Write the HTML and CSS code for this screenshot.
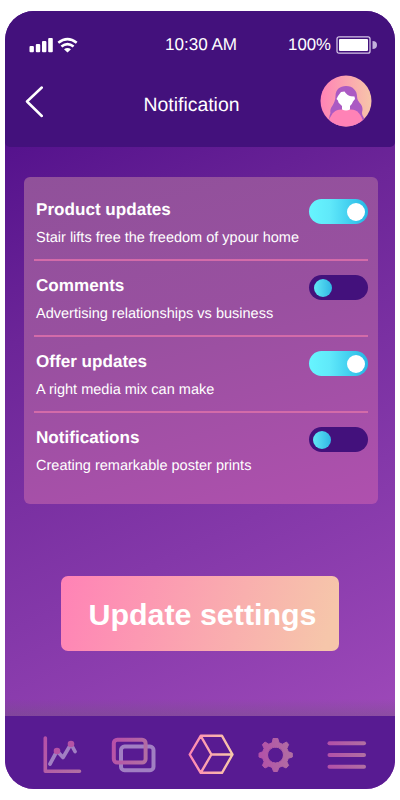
FILE: index.html
```html
<!DOCTYPE html>
<html lang="en">
<head>
<meta charset="utf-8">
<title>Notification</title>
<link rel="stylesheet" href="styles.css">
</head>
<body>
<div class="phone">
  <header class="header">
    <div class="status">
      <svg class="signal" width="50" height="18" viewBox="0 0 50 18" fill="#fff">
        <rect x="0.5" y="9" width="4.4" height="6.2" rx="1"/><rect x="6.8" y="7" width="4.4" height="8.2" rx="1"/><rect x="13" y="4" width="4.4" height="11.2" rx="1"/><rect x="19.2" y="1" width="4.6" height="14.2" rx="1"/>
        <g fill="none" stroke="#fff" stroke-width="2.6"><path d="M29.3 5.8Q38.5-1.5 47.7 5.8"/><path d="M32.4 9.5Q38.5 4.8 44.6 9.5"/></g>
        <path d="M35 12.2Q38.5 9.8 42 12.2L38.5 15.5Z"/>
      </svg>
      <span class="time">10:30 AM</span>
      <div class="power"><span>100%</span>
        <svg width="42" height="20" viewBox="0 0 42 20"><rect x="1" y="1.8" width="33" height="16.4" rx="2" fill="none" stroke="#d3c4e5" stroke-width="1.3"/><rect x="3" y="4" width="29" height="12" rx="1" fill="#fff"/><path d="M36.5 6Q41 6 41 10T36.5 14Z" fill="#c3b2dc"/></svg>
      </div>
    </div>
    <div class="titlebar">
      <svg class="back" width="20" height="34" viewBox="0 0 20 34"><path d="M18.8 3.5L4 17.5L18.8 32" fill="none" stroke="#fff" stroke-width="2.5" stroke-linecap="round" stroke-linejoin="round"/></svg>
      <h1>Notification</h1>
      <svg class="avatar" width="52" height="52" viewBox="0 0 52 52">
        <defs><linearGradient id="skin"><stop stop-color="#ff82b6"/><stop offset="1" stop-color="#f7c6a9"/></linearGradient><clipPath id="round"><circle cx="26" cy="26" r="25.5"/></clipPath></defs>
        <g clip-path="url(#round)"><rect width="52" height="52" fill="url(#skin)"/>
        <path d="M15.5 21C15.5 14.5 20 11 26 11C33 11 37 16 37 21C37 28 42.5 28 42.5 34C42.5 37 41 38 43.5 42C45 45 44 51 40 51H13C8 47 9 41 10.5 38C9 32 15.5 30 15.5 21Z" fill="#ab5ac3"/>
        <path d="M9 45C12 38 15 34.5 21 34.5H31C38 34.5 41 40 43.5 47L38 52H14Z" fill="#ff82b6"/>
        <path d="M22 31L18.5 27.5L18 25.5L16.5 24L18 21L21 17L24.5 16.5Q27 20.5 31 21.3L34.5 21.5L35 24L33 26.5Q32 29.5 30 31V34.5Q26 36.5 22 34.5Z" fill="#fff"/></g>
      </svg>
    </div>
  </header>
  <main class="content">
    <section class="card">
      <div class="item"><div class="copy"><h2>Product updates</h2><p>Stair lifts free the freedom of ypour home</p></div><span class="toggle on"></span></div>
      <div class="item"><div class="copy"><h2>Comments</h2><p>Advertising relationships vs business</p></div><span class="toggle"></span></div>
      <div class="item"><div class="copy"><h2>Offer updates</h2><p>A right media mix can make</p></div><span class="toggle on"></span></div>
      <div class="item"><div class="copy"><h2>Notifications</h2><p>Creating remarkable poster prints</p></div><span class="toggle last"></span></div>
    </section>
    <button class="update">Update settings</button>
  </main>
  <nav class="nav">
    <svg width="390" height="73" viewBox="5 716 390 73" fill="none" stroke-linecap="round" stroke-linejoin="round">
      <defs>
        <linearGradient id="chart" gradientUnits="userSpaceOnUse" x1="43" y1="740" x2="81" y2="770"><stop stop-color="#b650a8"/><stop offset="1" stop-color="#b170a3"/></linearGradient>
        <linearGradient id="cards" gradientUnits="userSpaceOnUse" x1="112" y1="745" x2="148" y2="757"><stop stop-color="#b850a8"/><stop offset="1" stop-color="#b170a3"/></linearGradient>
        <linearGradient id="cube" gradientUnits="userSpaceOnUse" x1="189" y1="0" x2="233" y2="0"><stop stop-color="#ff86b3"/><stop offset="1" stop-color="#f8caa9"/></linearGradient>
        <linearGradient id="gear" gradientUnits="userSpaceOnUse" x1="259" y1="0" x2="293" y2="0"><stop stop-color="#b350a8"/><stop offset="1" stop-color="#b170a2"/></linearGradient>
        <linearGradient id="menu" gradientUnits="userSpaceOnUse" x1="328" y1="0" x2="366" y2="0"><stop stop-color="#b350a8"/><stop offset="1" stop-color="#b170a2"/></linearGradient>
      </defs>
      <path d="M50 764L57 751L63 757.5L71 744L75 751.5" stroke="#a17fc3" stroke-width="3.7"/>
      <path d="M45.3 738V771.3H79.5" stroke="url(#chart)" stroke-width="3.6"/>
      <g fill="#b552a5"><circle cx="57" cy="751" r="3.3"/><circle cx="71" cy="744" r="3.3"/></g>
      <rect x="121" y="746.6" width="32.5" height="23.6" rx="3.5" stroke="#a17fc3" stroke-width="4"/>
      <rect x="113.8" y="739.7" width="31.8" height="22.8" rx="3.5" stroke="url(#cards)" stroke-width="4"/>
      <path d="M189.7 754.5L200.7 735.8H222L232.5 754.5L222 772.8H200.7ZM200.7 735.8L211.4 754.5L200.7 772.8M211.4 754.5L232.5 754.4" stroke="url(#cube)" stroke-width="2.4"/>
      <path stroke="url(#gear)" stroke-width="1" fill="url(#gear)" fill-rule="evenodd" d="M273.4 738.5H277.8L279 742.8L282.5 744.2L286.5 742L288.6 744.5L286.9 748.4L288.3 751.8L292.3 753.2V757L288.3 758.3L286.9 761.8L288.6 765.5L286.1 768L282.1 766.1L279 767.4L277.4 771.5H273.6L272 767.4L268.8 766.1L265 768L262.4 765.5L264.1 761.8L262.7 758.3L259 757V753.2L262.7 751.8L264.1 748.4L262.4 744.5L265 742L268.8 744.2L272 742.8ZM275.5 747A8 8 0 1 0 275.5 763A8 8 0 1 0 275.5 747Z"/>
      <g fill="url(#menu)"><rect x="327.5" y="741.2" width="38.5" height="4" rx="2"/><rect x="327.5" y="753" width="38.5" height="4" rx="2"/><rect x="327.5" y="764.8" width="38.5" height="4" rx="2"/></g>
    </svg>
  </nav>
</div>
</body>
</html>
```
FILE: styles.css
```css
* { box-sizing: border-box; }
body { margin: 0; background: #fff; color: #fff; font-family: "Liberation Sans", Arial, sans-serif; text-rendering: geometricPrecision; }
h1, h2, p { margin: 0; }
svg { display: block; flex: none; }
.phone { width: 390px; height: 778px; margin: 11px 5px; overflow: hidden; border-radius: 29px; display: flex; flex-direction: column; background: linear-gradient(155deg, #4b0a88 5%, #6c2598 35%, #8438a9 65%, #a44dbd 100%); }
.header { height: 135.5px; flex: none; background: #43117c; border-radius: 0 0 5px 5px; }
.status { display: grid; grid-template-columns: 1fr 80px 1fr; grid-template-rows: 20px; align-items: center; height: 20px; margin-top: 24px; padding: 0 17px 0 24px; font-size: 17.1px; line-height: 20px; }
.signal { margin-top: 1px; }
.time { white-space: nowrap; text-align: center; margin-left: -5px; }
.power { display: flex; justify-content: flex-end; align-items: center; gap: 5px; }
.power span { font-size: 16.8px; }
.titlebar { display: grid; grid-template-columns: 52px 1fr 52px; align-items: center; height: 52px; margin-top: 20px; padding: 0 23.5px 0 18px; }
h1 { font-size: 19.4px; font-weight: 400; line-height: 24px; text-align: center; padding: 7px 11.5px 0 0; }
.content { flex: 1; display: flex; flex-direction: column; align-items: center; padding-top: 30px; background: linear-gradient(transparent 97%, rgba(107, 85, 120, .35)); }
.card { width: 354px; height: 327px; margin-left: 2px; padding: 8px 10px; border-radius: 6px; background: linear-gradient(165deg, #90519a, #9950a0 45%, #af50ae); }
.item { height: 76px; padding: 14.5px 0 0 2px; display: flex; justify-content: space-between; border-bottom: 2px solid #d36ba9; }
.item:last-child { border: 0; }
.copy { white-space: nowrap; }
h2 { font-size: 17.1px; line-height: 22px; }
p { margin-top: 8px; font-size: 14.53px; line-height: 18px; }
.toggle { width: 59px; height: 25px; border-radius: 13px; padding: 3.5px 5px; background: #43117c; }
.toggle::before { content: ""; display: block; width: 18px; height: 18px; border-radius: 50%; background: linear-gradient(90deg, #61e8f5, #31b6e4); }
.on { background: linear-gradient(90deg, #67f5ff, #60e9fa 35%, #26b6e5); }
.on::before { margin-left: auto; margin-right: -2px; background: #fff; }
.last { padding-left: 4px; }
.update { width: 278px; height: 75px; margin-top: 72.5px; border: 0; border-radius: 7px; padding: 2px 0 0 5px; color: #fff; background: linear-gradient(105deg, #ff82b6, #f6c6aa 95%); font: bold 30.4px "Liberation Sans", Arial, sans-serif; }
.nav { height: 73px; flex: none; background: #581b92; }
```
